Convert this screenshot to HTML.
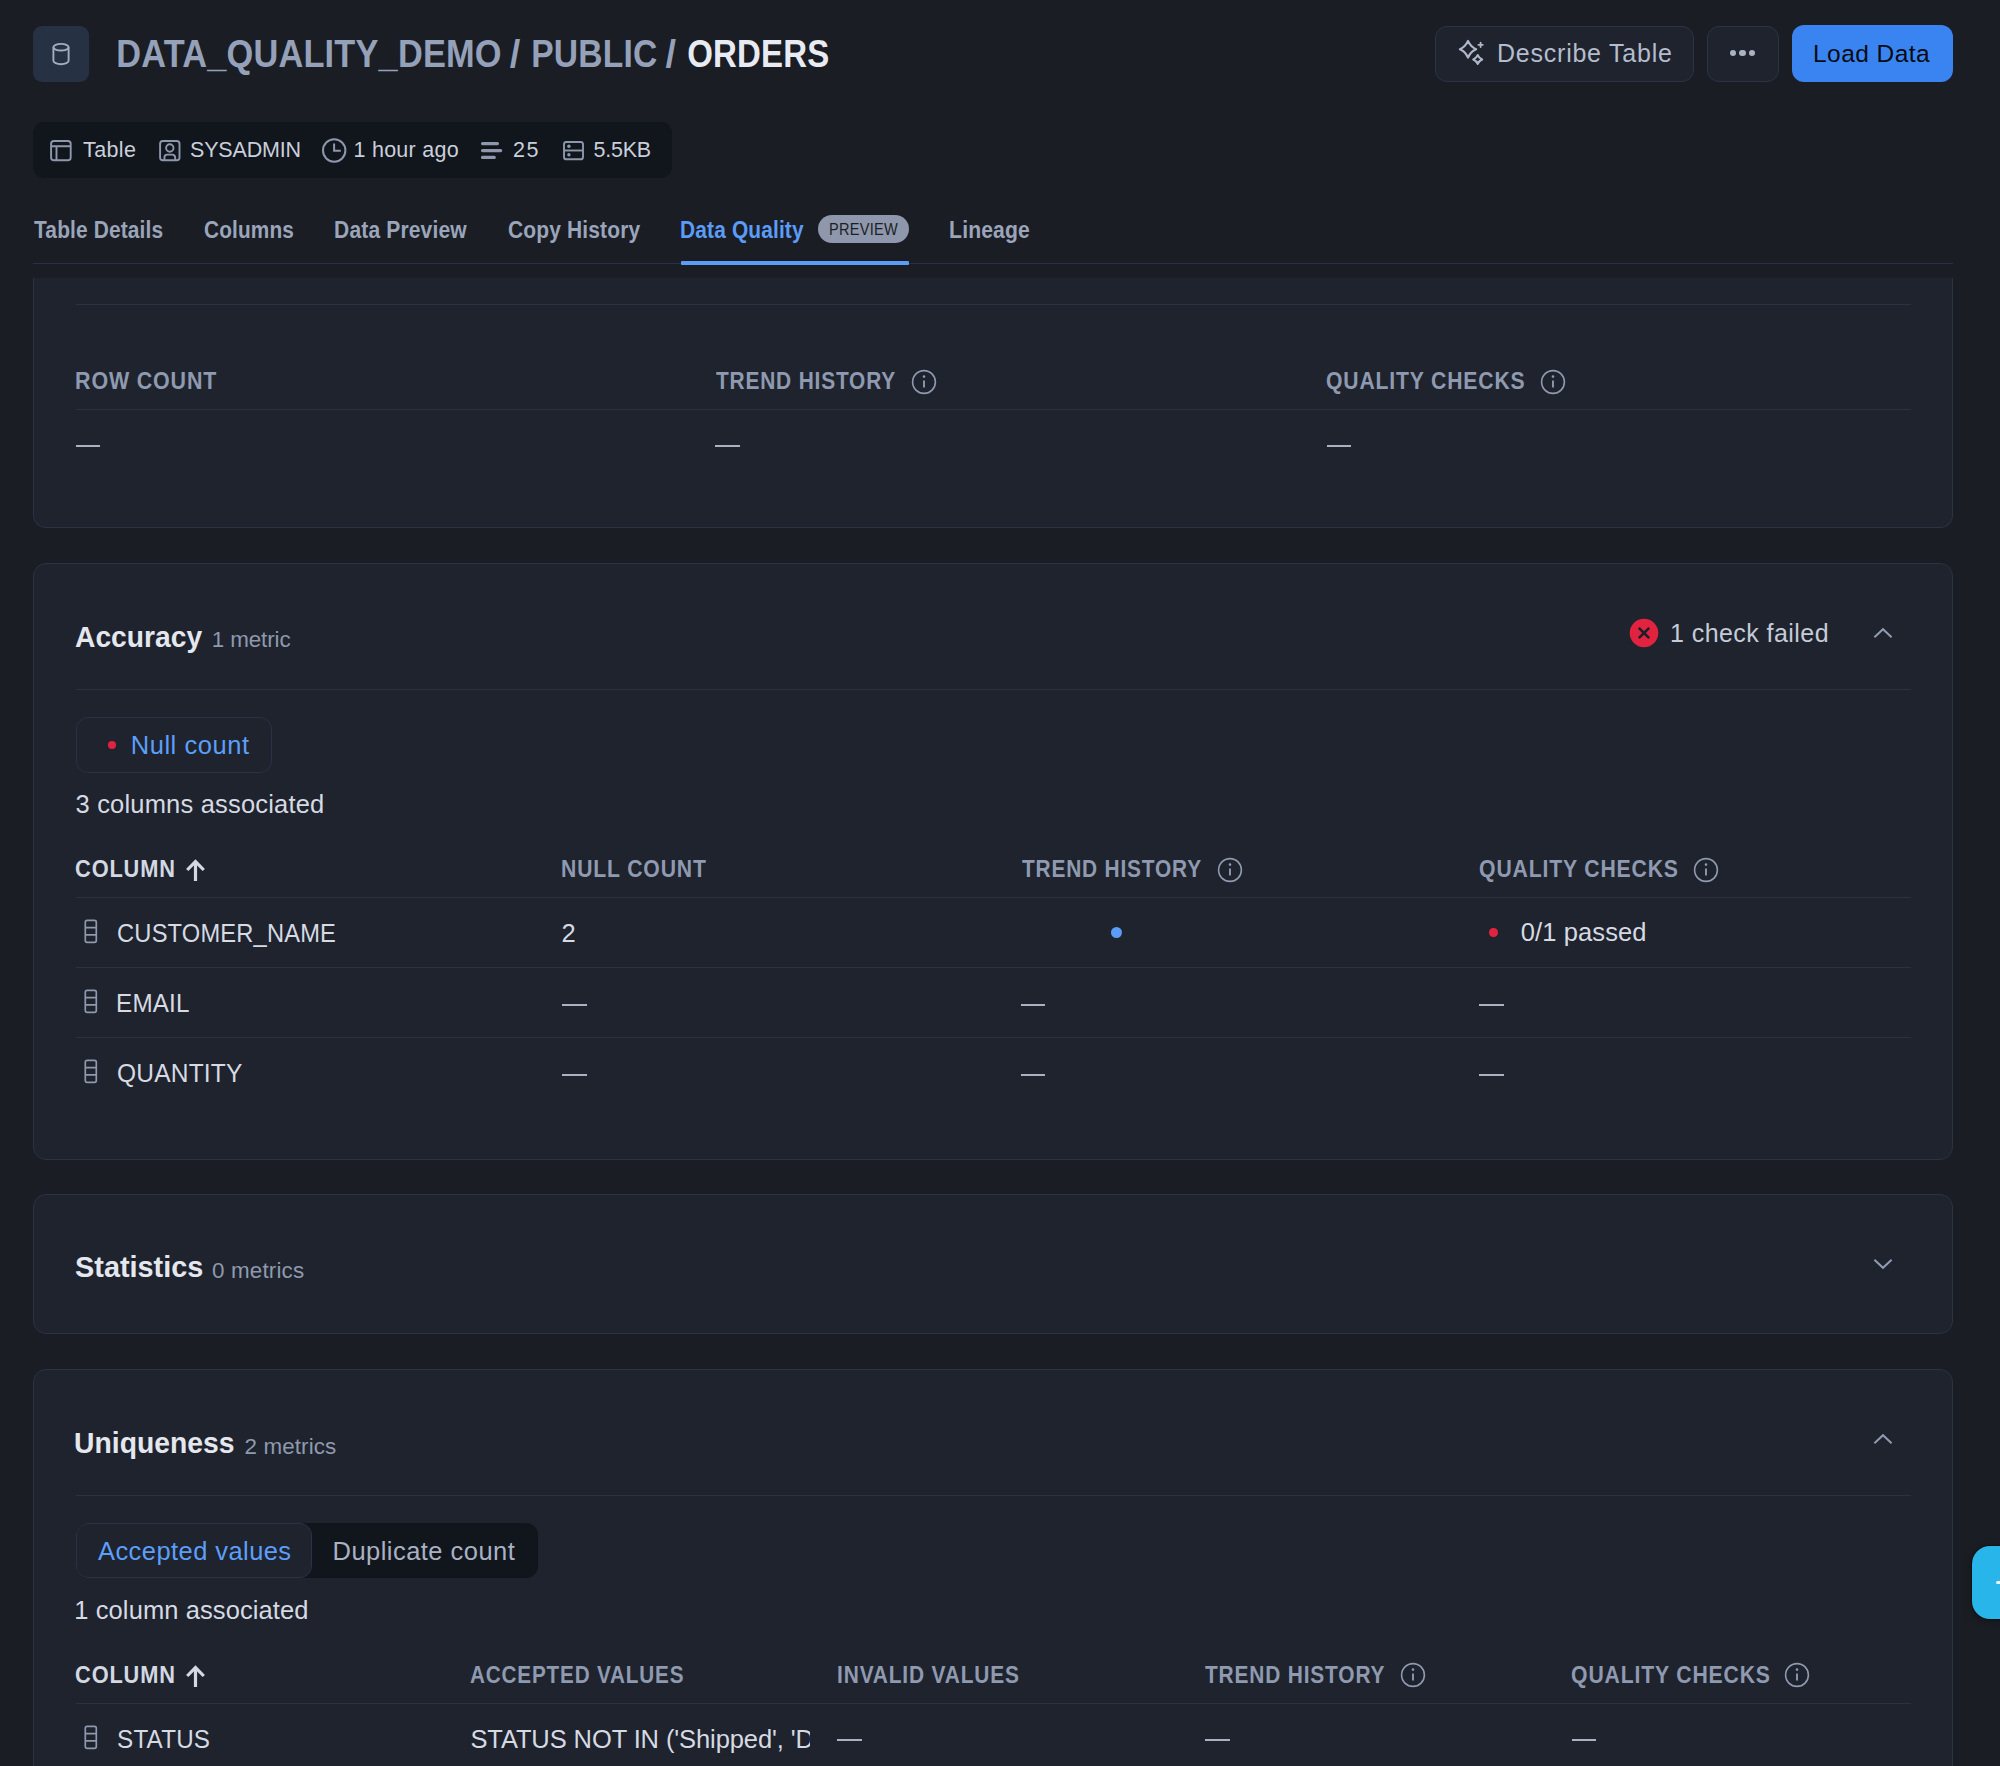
<!DOCTYPE html>
<html><head><meta charset="utf-8"><style>
html,body{margin:0;padding:0;}
body{width:2000px;height:1766px;overflow:hidden;background:#1a1d24;position:relative;font-family:"Liberation Sans", sans-serif;}
.t{position:absolute;white-space:nowrap;line-height:1;}
</style></head><body>
<div style="position:absolute;left:33px;top:26px;width:56px;height:56px;background-color:#273144;border-radius:9px"></div>
<svg style="position:absolute;left:50px;top:41px" width="22" height="26" viewBox="0 0 22 26" fill="none" stroke="#a3adc2" stroke-width="1.9"><ellipse cx="11" cy="6.2" rx="7.6" ry="3.3"/><path d="M3.4 6.2v13.6c0 1.9 3.4 3.4 7.6 3.4s7.6-1.5 7.6-3.4V6.2"/></svg>
<div class="t" style="left:116.00px;top:35.00px;font-size:38px;font-weight:700;color:#95a1b9;letter-spacing:0.200px;transform:scaleX(0.9043);transform-origin:2px 0;">DATA_QUALITY_DEMO</div>
<div class="t" style="left:509.70px;top:35.00px;font-size:38px;font-weight:700;color:#95a1b9;letter-spacing:0.000px;">/</div>
<div class="t" style="left:531.10px;top:35.00px;font-size:38px;font-weight:700;color:#95a1b9;letter-spacing:0.200px;transform:scaleX(0.8842);transform-origin:2px 0;">PUBLIC</div>
<div class="t" style="left:665.40px;top:35.00px;font-size:38px;font-weight:700;color:#95a1b9;letter-spacing:0.000px;">/</div>
<div class="t" style="left:687.00px;top:35.00px;font-size:38px;font-weight:700;color:#e8ebf1;letter-spacing:0.200px;transform:scaleX(0.8683);transform-origin:1px 0;">ORDERS</div>
<div style="position:absolute;left:1435px;top:26px;width:259px;height:56px;box-sizing:border-box;border:1.5px solid #2b3345;background:#1f232d;border-radius:12px"></div>
<svg style="position:absolute;left:1452px;top:34px" width="40" height="38" viewBox="0 0 40 38" fill="none" stroke="#aeb7c9" stroke-width="2.2" stroke-linejoin="round" stroke-linecap="round">
<path d="M16 6.9 Q18.5 12.7 24.1 15.2 Q18.5 17.7 16 23.5 Q13.5 17.7 7.9 15.2 Q13.5 12.7 16 6.9Z"/>
<path d="M25.7 21.1 Q27.1 24.1 30.1 25.5 Q27.1 26.9 25.7 29.9 Q24.3 26.9 21.3 25.5 Q24.3 24.1 25.7 21.1Z"/>
<path d="M28.6 8.6v4.4M26.4 10.8h4.4" stroke-width="1.8"/></svg>
<div class="t" style="left:1497.00px;top:41.00px;font-size:25px;font-weight:400;color:#b4bdce;letter-spacing:0.769px;">Describe Table</div>
<div style="position:absolute;left:1707px;top:26px;width:72px;height:56px;box-sizing:border-box;border:1.5px solid #2b3345;background:#1f232d;border-radius:12px"></div>
<div style="position:absolute;left:1729.9px;top:49.7px;width:6.2px;height:6.2px;background:#aab3c5;border-radius:50%"></div>
<div style="position:absolute;left:1739.4px;top:49.7px;width:6.2px;height:6.2px;background:#aab3c5;border-radius:50%"></div>
<div style="position:absolute;left:1748.9px;top:49.7px;width:6.2px;height:6.2px;background:#aab3c5;border-radius:50%"></div>
<div style="position:absolute;left:1792px;top:25px;width:161px;height:57px;background:#3a84f2;border-radius:12px"></div>
<div class="t" style="left:1813.00px;top:42.00px;font-size:24.5px;font-weight:400;color:#080b10;letter-spacing:0.438px;">Load Data</div>
<div style="position:absolute;left:33px;top:122px;width:639px;height:56px;background:#11151c;border-radius:11px"></div>
<svg style="position:absolute;left:44px;top:134px" width="34" height="34" viewBox="44 134 34 34" fill="none" stroke="#8e98ad" stroke-width="1.9">
<rect x="51.1" y="141" width="19.6" height="19.2" rx="2.8"/><path d="M51.1 146.3h19.6M56.5 146.3v13.9"/></svg>
<svg style="position:absolute;left:154px;top:134px" width="34" height="34" viewBox="154 134 34 34" fill="none" stroke="#8e98ad" stroke-width="1.9">
<rect x="160.1" y="141" width="19.4" height="19.2" rx="2.8"/><circle cx="169.8" cy="148" r="3.7"/><path d="M164.4 160.2v-2.6a3 3 0 0 1 3-3h4.8a3 3 0 0 1 3 3v2.6"/></svg>
<svg style="position:absolute;left:316px;top:134px" width="36" height="34" viewBox="316 134 36 34" fill="none" stroke="#8e98ad" stroke-width="2">
<circle cx="334.2" cy="150.5" r="11.2"/><path d="M334.1 143.6v7.1h6.7"/></svg>
<svg style="position:absolute;left:476px;top:136px" width="30" height="28" viewBox="476 136 30 28" fill="none" stroke="#8e98ad" stroke-width="3.4" stroke-linecap="round" stroke-linejoin="round">
<path d="M482.6 143.6h14.8M482.6 150.6h18M482.6 157.4h11.6"/></svg>
<svg style="position:absolute;left:558px;top:136px" width="30" height="28" viewBox="558 136 30 28" fill="none" stroke="#8e98ad" stroke-width="1.9">
<rect x="564" y="142" width="19" height="17.3" rx="2.4"/><path d="M564 150.5h19"/><circle cx="568.9" cy="146.2" r="1.7" fill="#8e98ad" stroke="none"/><circle cx="568.9" cy="154.8" r="1.7" fill="#8e98ad" stroke="none"/></svg>
<div class="t" style="left:83.00px;top:140.00px;font-size:21.5px;font-weight:400;color:#c9cfdb;letter-spacing:0.375px;">Table</div>
<div class="t" style="left:190.00px;top:140.00px;font-size:21.5px;font-weight:400;color:#c9cfdb;letter-spacing:-0.171px;">SYSADMIN</div>
<div class="t" style="left:353.50px;top:140.00px;font-size:21.5px;font-weight:400;color:#c9cfdb;letter-spacing:0.256px;">1 hour ago</div>
<div class="t" style="left:513.00px;top:140.00px;font-size:21.5px;font-weight:400;color:#c9cfdb;letter-spacing:1.500px;">25</div>
<div class="t" style="left:593.50px;top:140.00px;font-size:21.5px;font-weight:400;color:#c9cfdb;letter-spacing:-0.250px;">5.5KB</div>
<div class="t" style="left:34.00px;top:219.00px;font-size:23px;font-weight:700;color:#9aa5ba;letter-spacing:0.150px;transform:scaleX(0.9097);transform-origin:0px 0;">Table Details</div>
<div class="t" style="left:203.50px;top:219.00px;font-size:23px;font-weight:700;color:#9aa5ba;letter-spacing:0.150px;transform:scaleX(0.9040);transform-origin:1px 0;">Columns</div>
<div class="t" style="left:334.00px;top:219.00px;font-size:23px;font-weight:700;color:#9aa5ba;letter-spacing:0.150px;transform:scaleX(0.9154);transform-origin:1px 0;">Data Preview</div>
<div class="t" style="left:507.50px;top:219.00px;font-size:23px;font-weight:700;color:#9aa5ba;letter-spacing:0.150px;transform:scaleX(0.9119);transform-origin:1px 0;">Copy History</div>
<div class="t" style="left:680.00px;top:219.00px;font-size:23px;font-weight:700;color:#5b9cf7;letter-spacing:0.150px;transform:scaleX(0.9090);transform-origin:1px 0;">Data Quality</div>
<div class="t" style="left:949.00px;top:219.00px;font-size:23px;font-weight:700;color:#9aa5ba;letter-spacing:0.150px;transform:scaleX(0.9197);transform-origin:1px 0;">Lineage</div>
<div style="position:absolute;left:818px;top:215px;width:91px;height:28px;background:#8e97ab;border-radius:14px"></div>
<div class="t" style="left:828.50px;top:222.00px;font-size:16px;font-weight:400;color:#1b1f27;letter-spacing:0.300px;transform:scaleX(0.9091);transform-origin:1px 0;">PREVIEW</div>
<div style="position:absolute;left:33px;top:263px;width:1920px;height:1px;background:#293143"></div>
<div style="position:absolute;left:681px;top:261px;width:228px;height:4px;background:#5b9cf7;border-radius:1px"></div>
<div style="position:absolute;left:33px;top:278px;width:1920px;height:250px;box-sizing:border-box;background:#1e232d;border:1px solid #2a3244;border-top:none;border-radius:0 0 13px 13px"></div>
<div style="position:absolute;left:76px;top:304px;width:1835px;height:1px;background:#293143"></div>
<div class="t" style="left:75.00px;top:370.00px;font-size:23px;font-weight:700;color:#8f9ab0;letter-spacing:0.900px;transform:scaleX(0.9321);transform-origin:1px 0;">ROW COUNT</div>
<div class="t" style="left:716.00px;top:370.00px;font-size:23px;font-weight:700;color:#8f9ab0;letter-spacing:0.900px;transform:scaleX(0.9080);transform-origin:0px 0;">TREND HISTORY</div>
<svg style="position:absolute;left:909.6px;top:367.6px" width="28" height="28" viewBox="0 0 28 28" fill="none" stroke="#8f9ab0" stroke-width="1.6"><circle cx="14" cy="14" r="11.4"/><path d="M14 12.6v6.9" stroke-width="1.9"/><circle cx="14" cy="8.6" r="1.3" fill="#8f9ab0" stroke="none"/></svg>
<div class="t" style="left:1326.30px;top:370.00px;font-size:23px;font-weight:700;color:#8f9ab0;letter-spacing:0.900px;transform:scaleX(0.9204);transform-origin:1px 0;">QUALITY CHECKS</div>
<svg style="position:absolute;left:1538.5px;top:367.6px" width="28" height="28" viewBox="0 0 28 28" fill="none" stroke="#8f9ab0" stroke-width="1.6"><circle cx="14" cy="14" r="11.4"/><path d="M14 12.6v6.9" stroke-width="1.9"/><circle cx="14" cy="8.6" r="1.3" fill="#8f9ab0" stroke="none"/></svg>
<div style="position:absolute;left:76px;top:409px;width:1835px;height:1px;background:#293143"></div>
<div style="position:absolute;left:75.5px;top:444.6px;width:24.5px;height:2.2px;background:#a9b1c2"></div>
<div style="position:absolute;left:715px;top:444.6px;width:24.5px;height:2.2px;background:#a9b1c2"></div>
<div style="position:absolute;left:1326.5px;top:444.6px;width:24.5px;height:2.2px;background:#a9b1c2"></div>
<div style="position:absolute;left:33px;top:563px;width:1920px;height:597px;box-sizing:border-box;background:#1e232d;border:1px solid #2a3244;border-radius:13px"></div>
<div class="t" style="left:75.00px;top:622.00px;font-size:30px;font-weight:700;color:#e4e7ee;letter-spacing:0.000px;transform:scaleX(0.9403);transform-origin:1px 0;">Accuracy</div>
<div class="t" style="left:211.70px;top:629.00px;font-size:22.4px;font-weight:400;color:#8e99ae;letter-spacing:-0.100px;">1 metric</div>
<svg style="position:absolute;left:1629px;top:618px" width="30" height="30" viewBox="0 0 30 30"><circle cx="15" cy="15" r="14.3" fill="#e2233f"/><path d="M9.8 9.8 L20.2 20.2 M20.2 9.8 L9.8 20.2" stroke="#1b1f29" stroke-width="2.6"/></svg>
<div class="t" style="left:1670.00px;top:621.00px;font-size:25px;font-weight:400;color:#c5ccd8;letter-spacing:0.438px;">1 check failed</div>
<svg style="position:absolute;left:1873px;top:626.3px" width="20" height="14" viewBox="0 0 20 14" fill="none" stroke="#909bb3" stroke-width="2"><path d="M1.4 11.2 L10 3.2 L18.6 11.2"/></svg>
<div style="position:absolute;left:76px;top:689px;width:1835px;height:1px;background:#293143"></div>
<div style="position:absolute;left:76px;top:717px;width:196px;height:56px;box-sizing:border-box;border:1px solid #2b3146;border-radius:12px"></div>
<div style="position:absolute;left:107.8px;top:740.9px;width:8.2px;height:8.2px;background:#e2233f;border-radius:50%"></div>
<div class="t" style="left:130.70px;top:733.00px;font-size:25.5px;font-weight:400;color:#5d9ef8;letter-spacing:0.556px;">Null count</div>
<div class="t" style="left:75.50px;top:792.00px;font-size:25.5px;font-weight:400;color:#d6dae3;letter-spacing:0.184px;">3 columns associated</div>
<div class="t" style="left:75.00px;top:858.00px;font-size:23px;font-weight:700;color:#d3d8e2;letter-spacing:0.900px;transform:scaleX(0.9469);transform-origin:1px 0;">COLUMN</div>
<svg style="position:absolute;left:185px;top:858.5px" width="21" height="23" viewBox="0 0 21 23" fill="none" stroke="#d3d8e2" stroke-width="3.2" stroke-linecap="butt" stroke-linejoin="miter"><path d="M10.5 22V3.5"/><path d="M2.2 11 L10.5 2.6 L18.8 11"/></svg>
<div class="t" style="left:561.20px;top:858.00px;font-size:23px;font-weight:700;color:#8f9ab0;letter-spacing:0.900px;transform:scaleX(0.9212);transform-origin:1px 0;">NULL COUNT</div>
<div class="t" style="left:1021.60px;top:858.00px;font-size:23px;font-weight:700;color:#8f9ab0;letter-spacing:0.900px;transform:scaleX(0.9075);transform-origin:0px 0;">TREND HISTORY</div>
<svg style="position:absolute;left:1215.7px;top:855.8px" width="28" height="28" viewBox="0 0 28 28" fill="none" stroke="#8f9ab0" stroke-width="1.6"><circle cx="14" cy="14" r="11.4"/><path d="M14 12.6v6.9" stroke-width="1.9"/><circle cx="14" cy="8.6" r="1.3" fill="#8f9ab0" stroke="none"/></svg>
<div class="t" style="left:1479.00px;top:858.00px;font-size:23px;font-weight:700;color:#8f9ab0;letter-spacing:0.900px;transform:scaleX(0.9219);transform-origin:1px 0;">QUALITY CHECKS</div>
<svg style="position:absolute;left:1691.7px;top:855.8px" width="28" height="28" viewBox="0 0 28 28" fill="none" stroke="#8f9ab0" stroke-width="1.6"><circle cx="14" cy="14" r="11.4"/><path d="M14 12.6v6.9" stroke-width="1.9"/><circle cx="14" cy="8.6" r="1.3" fill="#8f9ab0" stroke="none"/></svg>
<div style="position:absolute;left:76px;top:897px;width:1835px;height:1px;background:#293143"></div>
<div style="position:absolute;left:76px;top:967px;width:1835px;height:1px;background:#293143"></div>
<div style="position:absolute;left:76px;top:1037px;width:1835px;height:1px;background:#293143"></div>
<svg style="position:absolute;left:83.5px;top:919px" width="14" height="25" viewBox="0 0 14 25" fill="none" stroke="#8e99ae" stroke-width="1.7"><rect x="1.3" y="1.3" width="11" height="22" rx="1.9"/><path d="M1.3 8.6h11M1.3 15.9h11"/></svg>
<div class="t" style="left:117.00px;top:921.00px;font-size:25.5px;font-weight:400;color:#d6dae3;letter-spacing:0.200px;transform:scaleX(0.9284);transform-origin:1px 0;">CUSTOMER_NAME</div>
<svg style="position:absolute;left:83.5px;top:989px" width="14" height="25" viewBox="0 0 14 25" fill="none" stroke="#8e99ae" stroke-width="1.7"><rect x="1.3" y="1.3" width="11" height="22" rx="1.9"/><path d="M1.3 8.6h11M1.3 15.9h11"/></svg>
<div class="t" style="left:116.00px;top:991.00px;font-size:25.5px;font-weight:400;color:#d6dae3;letter-spacing:0.200px;transform:scaleX(0.9492);transform-origin:2px 0;">EMAIL</div>
<svg style="position:absolute;left:83.5px;top:1059px" width="14" height="25" viewBox="0 0 14 25" fill="none" stroke="#8e99ae" stroke-width="1.7"><rect x="1.3" y="1.3" width="11" height="22" rx="1.9"/><path d="M1.3 8.6h11M1.3 15.9h11"/></svg>
<div class="t" style="left:117.00px;top:1061.00px;font-size:25.5px;font-weight:400;color:#d6dae3;letter-spacing:0.200px;transform:scaleX(0.9618);transform-origin:1px 0;">QUANTITY</div>
<div class="t" style="left:561.50px;top:921.00px;font-size:25.5px;font-weight:400;color:#d6dae3;letter-spacing:0.000px;">2</div>
<div style="position:absolute;left:1110.5px;top:926.9px;width:11px;height:11px;background:#5b9cf7;border-radius:50%"></div>
<div style="position:absolute;left:1489px;top:928.2px;width:8.5px;height:8.5px;background:#e2233f;border-radius:50%"></div>
<div class="t" style="left:1520.80px;top:920.00px;font-size:25.5px;font-weight:400;color:#d6dae3;letter-spacing:0.100px;">0/1 passed</div>
<div style="position:absolute;left:562px;top:1003.5px;width:24.5px;height:2.2px;background:#a9b1c2"></div>
<div style="position:absolute;left:1020.6px;top:1003.5px;width:24.5px;height:2.2px;background:#a9b1c2"></div>
<div style="position:absolute;left:1479px;top:1003.5px;width:24.5px;height:2.2px;background:#a9b1c2"></div>
<div style="position:absolute;left:562px;top:1073.5px;width:24.5px;height:2.2px;background:#a9b1c2"></div>
<div style="position:absolute;left:1020.6px;top:1073.5px;width:24.5px;height:2.2px;background:#a9b1c2"></div>
<div style="position:absolute;left:1479px;top:1073.5px;width:24.5px;height:2.2px;background:#a9b1c2"></div>
<div style="position:absolute;left:33px;top:1193.5px;width:1920px;height:140.5px;box-sizing:border-box;background:#1e232d;border:1px solid #2a3244;border-radius:13px"></div>
<div class="t" style="left:75.00px;top:1252.00px;font-size:30px;font-weight:700;color:#e4e7ee;letter-spacing:0.000px;transform:scaleX(0.9618);transform-origin:1px 0;">Statistics</div>
<div class="t" style="left:212.00px;top:1260.00px;font-size:22.4px;font-weight:400;color:#8e99ae;letter-spacing:0.162px;">0 metrics</div>
<svg style="position:absolute;left:1873px;top:1257px" width="20" height="14" viewBox="0 0 20 14" fill="none" stroke="#909bb3" stroke-width="2"><path d="M1.4 2.8 L10 10.8 L18.6 2.8"/></svg>
<div style="position:absolute;left:33px;top:1369px;width:1920px;height:431px;box-sizing:border-box;background:#1e232d;border:1px solid #2a3244;border-radius:13px"></div>
<div class="t" style="left:74.30px;top:1428.00px;font-size:30px;font-weight:700;color:#e4e7ee;letter-spacing:0.000px;transform:scaleX(0.9431);transform-origin:2px 0;">Uniqueness</div>
<div class="t" style="left:244.50px;top:1436.00px;font-size:22.4px;font-weight:400;color:#8e99ae;letter-spacing:0.125px;">2 metrics</div>
<svg style="position:absolute;left:1873px;top:1432px" width="20" height="14" viewBox="0 0 20 14" fill="none" stroke="#909bb3" stroke-width="2"><path d="M1.4 11.2 L10 3.2 L18.6 11.2"/></svg>
<div style="position:absolute;left:76px;top:1495px;width:1835px;height:1px;background:#293143"></div>
<div style="position:absolute;left:76px;top:1523px;width:462px;height:55px;background:#11151c;border-radius:12px"></div>
<div style="position:absolute;left:76px;top:1523px;width:236px;height:55px;box-sizing:border-box;background:#1e232d;border:1px solid #2b3146;border-radius:12px"></div>
<div class="t" style="left:98.00px;top:1539.00px;font-size:25.5px;font-weight:400;color:#5d9ef8;letter-spacing:0.429px;">Accepted values</div>
<div class="t" style="left:332.50px;top:1539.00px;font-size:25.5px;font-weight:400;color:#a9b2c3;letter-spacing:0.464px;">Duplicate count</div>
<div class="t" style="left:74.30px;top:1598.00px;font-size:25.5px;font-weight:400;color:#d6dae3;letter-spacing:0.094px;">1 column associated</div>
<div class="t" style="left:75.00px;top:1664.00px;font-size:23px;font-weight:700;color:#d3d8e2;letter-spacing:0.900px;transform:scaleX(0.9469);transform-origin:1px 0;">COLUMN</div>
<svg style="position:absolute;left:185px;top:1664.5px" width="21" height="23" viewBox="0 0 21 23" fill="none" stroke="#d3d8e2" stroke-width="3.2" stroke-linecap="butt" stroke-linejoin="miter"><path d="M10.5 22V3.5"/><path d="M2.2 11 L10.5 2.6 L18.8 11"/></svg>
<div class="t" style="left:470.40px;top:1664.00px;font-size:23px;font-weight:700;color:#8f9ab0;letter-spacing:0.900px;transform:scaleX(0.8998);transform-origin:1px 0;">ACCEPTED VALUES</div>
<div class="t" style="left:837.00px;top:1664.00px;font-size:23px;font-weight:700;color:#8f9ab0;letter-spacing:0.900px;transform:scaleX(0.9089);transform-origin:1px 0;">INVALID VALUES</div>
<div class="t" style="left:1205.00px;top:1664.00px;font-size:23px;font-weight:700;color:#8f9ab0;letter-spacing:0.900px;transform:scaleX(0.9096);transform-origin:0px 0;">TREND HISTORY</div>
<svg style="position:absolute;left:1399px;top:1661px" width="28" height="28" viewBox="0 0 28 28" fill="none" stroke="#8f9ab0" stroke-width="1.6"><circle cx="14" cy="14" r="11.4"/><path d="M14 12.6v6.9" stroke-width="1.9"/><circle cx="14" cy="8.6" r="1.3" fill="#8f9ab0" stroke="none"/></svg>
<div class="t" style="left:1570.50px;top:1664.00px;font-size:23px;font-weight:700;color:#8f9ab0;letter-spacing:0.900px;transform:scaleX(0.9219);transform-origin:1px 0;">QUALITY CHECKS</div>
<svg style="position:absolute;left:1782.5px;top:1661px" width="28" height="28" viewBox="0 0 28 28" fill="none" stroke="#8f9ab0" stroke-width="1.6"><circle cx="14" cy="14" r="11.4"/><path d="M14 12.6v6.9" stroke-width="1.9"/><circle cx="14" cy="8.6" r="1.3" fill="#8f9ab0" stroke="none"/></svg>
<div style="position:absolute;left:76px;top:1703px;width:1835px;height:1px;background:#293143"></div>
<svg style="position:absolute;left:83.5px;top:1724.5px" width="14" height="25" viewBox="0 0 14 25" fill="none" stroke="#8e99ae" stroke-width="1.7"><rect x="1.3" y="1.3" width="11" height="22" rx="1.9"/><path d="M1.3 8.6h11M1.3 15.9h11"/></svg>
<div class="t" style="left:117.00px;top:1727.00px;font-size:25.5px;font-weight:400;color:#d6dae3;letter-spacing:0.200px;transform:scaleX(0.9500);transform-origin:1px 0;">STATUS</div>
<div style="position:absolute;left:460px;top:1700px;width:350px;height:66px;overflow:hidden">
<div class="t" style="left:10.40px;top:27.00px;font-size:25.5px;font-weight:400;color:#d6dae3;letter-spacing:-0.100px;">STATUS NOT IN ('Shipped', 'Delivered')</div>
</div>
<div style="position:absolute;left:837.4px;top:1738.5px;width:24.5px;height:2.2px;background:#a9b1c2"></div>
<div style="position:absolute;left:1205px;top:1738.5px;width:24.5px;height:2.2px;background:#a9b1c2"></div>
<div style="position:absolute;left:1571.5px;top:1738.5px;width:24.5px;height:2.2px;background:#a9b1c2"></div>
<div style="position:absolute;left:1972px;top:1545.5px;width:60px;height:73px;background:#28b5e9;border-radius:18px;box-shadow:0 0 0 1px #140f0b, 0 2px 10px rgba(0,0,0,0.35)"></div>
<div style="position:absolute;left:1996.3px;top:1580.6px;width:6px;height:3px;background:#f2eef0;border-radius:1.5px 0 0 1.5px"></div>
</body></html>
